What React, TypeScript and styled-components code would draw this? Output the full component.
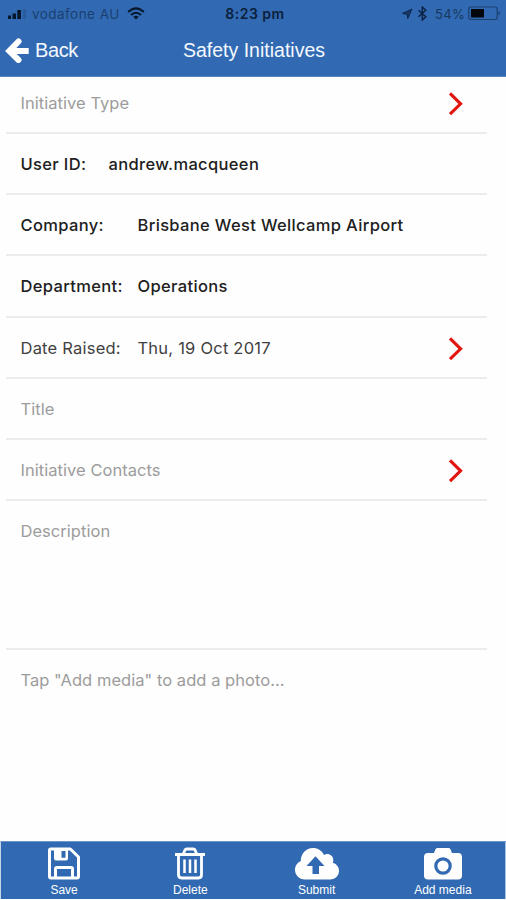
import React from "react";
import styled, { createGlobalStyle } from "styled-components";

const GlobalStyle = createGlobalStyle`
  * { box-sizing: border-box; }
  body { margin: 0; background: #fff; }
`;

const BLUE = "#316ab2";

const Screen = styled.div`
  display: flex;
  flex-direction: column;
  width: 506px;
  height: 900px;
  overflow: hidden;
  background: #fefefe;
  font-family: Inter, "Liberation Sans", sans-serif;
`;

const Header = styled.header`
  flex: none;
  height: 77px;
  background: ${BLUE};
  border-bottom: 1px solid #5583bd;
`;

const StatusBar = styled.div`
  display: grid;
  grid-template-columns: 1fr auto 1fr;
  align-items: center;
  height: 27px;
  padding: 0 5px 0 7px;
  color: #10294c;
  font-size: 13px;
`;

const StatusGroup = styled.div<{ $end?: boolean }>`
  display: flex;
  align-items: center;
  justify-content: ${(p) => (p.$end ? "flex-end" : "flex-start")};
`;

const Carrier = styled.span`
  margin: 0 7px 0 5px;
  font-size: 13.5px;
  letter-spacing: 0.45px;
  color: #1b3f70;
`;

const Clock = styled.span`
  padding-left: 2px;
  font-weight: 600;
  font-size: 14px;
  letter-spacing: 0.5px;
  color: #0b1f3c;
`;

const Percent = styled.span`
  margin: 0 3px 0 7px;
  letter-spacing: 0.3px;
  color: #183861;
`;

const NavBar = styled.div`
  display: grid;
  grid-template-columns: 1fr auto 1fr;
  align-items: center;
  height: 46px;
  padding: 0 3px 0 5px;
  color: #f4f8ff;
  font-family: "Liberation Sans", Arial, sans-serif;
`;

const BackButton = styled.button`
  display: flex;
  align-items: center;
  gap: 6px;
  padding: 0;
  border: 0;
  background: none;
  color: inherit;
  font: 20px/24px "Liberation Sans", Arial, sans-serif;
  letter-spacing: -0.4px;
`;

const Title = styled.h1`
  margin: 0;
  font-size: 19.5px;
  line-height: 24px;
  font-weight: 400;
`;

const Form = styled.main`
  flex: 1;
  padding: 0 19px 0 6px;
`;

const Row = styled.div<{ $height?: number; $last?: boolean }>`
  display: flex;
  align-items: flex-start;
  height: ${(p) => p.$height ?? 61.2}px;
  padding: ${(p) => (p.$height && p.$height < 60 ? 15 : 19)}px 23px 0 14.5px;
  border-bottom: ${(p) => (p.$last ? 0 : 2)}px solid #ececec;
  font-size: 16.5px;
  line-height: 23px;
  white-space: nowrap;
`;

type Tone = "hint" | "strong" | "plain";
const tones: Record<Tone, string> = { hint: "#9c9c9c", strong: "#202020", plain: "#414141" };
const tracking: Record<Tone, number> = { hint: 0.04, strong: 0.35, plain: 0.22 };

const Text = styled.span<{ $tone: Tone; $width?: number }>`
  flex: none;
  width: ${(p) => (p.$width ? `${p.$width}px` : "auto")};
  color: ${(p) => tones[p.$tone]};
  font-weight: ${(p) => (p.$tone === "strong" ? 500 : 400)};
  letter-spacing: ${(p) => tracking[p.$tone]}px;
`;

const Chevron = styled.svg`
  flex: none;
  margin: -1px 0 0 auto;
`;

const Toolbar = styled.footer`
  display: grid;
  grid-template-columns: repeat(4, 1fr);
  flex: none;
  height: 58px;
  margin-bottom: 1px;
  background: ${BLUE};
  border-top: 1px solid #6d96ca;
  border-left: 1px solid #c5d6ea;
  box-shadow: inset -1px 0 #a9c2e0;
`;

const Action = styled.button`
  display: flex;
  flex-direction: column;
  align-items: center;
  padding: 5px 0 0;
  border: 0;
  background: none;
  color: #fff;
  font: 12px/14px "Liberation Sans", Arial, sans-serif;
`;

const ActionLabel = styled.span`
  margin-top: 3px;
`;

const RedChevron = () => (
  <Chevron width="16" height="25" viewBox="0 0 16 25">
    <path d="M2 2.3 12.6 12.8 2 23.2" fill="none" stroke="#e2150f" strokeWidth="3.1" />
  </Chevron>
);

const SignalIcon = () => (
  <svg width="20" height="12" viewBox="0 0 20 12">
    <path d="M1 7.500h3V11H1zM5.500 5.500h3.500V11H5.500zM10.300 2h3.700v9h-3.700z" fill="#07172e" />
    <path d="M16 1h3v10h-3z" fill="#2a5b9c" />
  </svg>
);

const WifiIcon = () => (
  <svg width="18" height="13" viewBox="0 0 18 13" fill="none" stroke="#07172e" strokeWidth="2">
    <path d="M1.2 5Q9-2.2 16.8 5M4 8q5-4.5 10 0" />
    <path d="m6.3 9.7 2.7 2.8 2.7-2.8Q9 7.8 6.3 9.7Z" fill="#07172e" stroke="none" />
  </svg>
);

const LocationIcon = () => (
  <svg width="12" height="12" viewBox="0 0 12 12">
    <path d="M11 1 6.8 10.500 6 6.200 1.500 5.400Z" fill="#173a6a" stroke="#0e294d" strokeWidth="1" />
  </svg>
);

const BluetoothIcon = () => (
  <svg width="11" height="15" viewBox="0 0 11 15">
    <path d="m1.5 4.2 7.3 6.5L5.3 14V1l3.5 3.2-7.3 6.5" fill="none" stroke="#0b2141" strokeWidth="1.4" />
  </svg>
);

const BatteryIcon = () => (
  <svg width="33" height="15" viewBox="0 0 33 15">
    <rect x=".7" y="1" width="28.5" height="12.5" rx="2.2" fill="none" stroke="#1c4071" strokeWidth="1.2" />
    <path d="M3 3h13v8.500H3z" fill="#02060d" />
    <path d="M30.500 5q3.200 2.200 0 4.500z" fill="#1c4071" />
  </svg>
);

const ArrowIcon = () => (
  <svg width="24" height="26" viewBox="0 0 24 26" fill="none" stroke="#fff" strokeWidth="6">
    <path d="M13.5 4.500 4.300 14l9.200 9" strokeLinecap="round" />
    <path d="M4 14h19.700" />
  </svg>
);

const SaveIcon = () => (
  <svg width="34" height="33" viewBox="0 0 34 33" fill="none" stroke="#fff" strokeWidth="3">
    <path d="M4 2h19.300L31.500 10v19.500q0 1.500-1.500 1.500H4q-1.500 0-1.500-1.500v-26Q2.500 2 4 2" strokeLinejoin="round" />
    <path d="M8.500 31V22q0-1.500 1.500-1.500h14q1.500 0 1.500 1.500v9" />
    <path d="M7 1h14v10.500q0 2-2 2H9q-2 0-2-2zM14.500 4v6.800h4V4z" fill="#fff" stroke="none" fillRule="evenodd" />
  </svg>
);

const TrashIcon = () => (
  <svg width="34" height="33" viewBox="0 0 34 33" fill="none" stroke="#fff" strokeWidth="2.8">
    <path d="M2 7.500h30M10 7.500 12 3q.5-1 1.800-1h6.400q1.300 0 1.800 1l2 4.500" />
    <path d="M5.500 8v19.500Q5.500 31 8.500 31h17q3 0 3-3.500V8" />
    <path d="M11.500 12.500v13.500M17 12.500v13.500M22.500 12.500v13.500" strokeWidth="2.5" />
  </svg>
);

const CloudIcon = () => (
  <svg width="46" height="33" viewBox="0 0 46 33">
    <path d="M11 32.5C5 32.5 1 28 1 22.8c0-4.1 2.4-7.1 5.8-8.8C6.7 6.8 12 1 19 1c5 0 9 2.7 11 7 4-2.5 9.3.2 9.3 5.2 0 1-.2 1.8-.6 2.6 3.7 1 6.3 4 6.3 8 0 4.9-3.8 8.7-8.7 8.7Z" fill="#fff" />
    <path d="m21.500 9.300 9 9.800H25v8h-6.500v-8h-6z" fill={BLUE} />
  </svg>
);

const CameraIcon = () => (
  <svg width="38" height="33" viewBox="0 0 38 33">
    <path d="M4 6h6l1.400-3.600Q12 1 13.700 1h10.600q1.700 0 2.300 1.400L28 6h6q4 0 4 4v18.500q0 4-4 4H4q-4 0-4-4V10q0-4 4-4Z" fill="#fff" />
    <circle cx="19" cy="19" r="7.2" fill="none" stroke={BLUE} strokeWidth="3.2" />
  </svg>
);

const actions = [
  { label: "Save", Icon: SaveIcon },
  { label: "Delete", Icon: TrashIcon },
  { label: "Submit", Icon: CloudIcon },
  { label: "Add media", Icon: CameraIcon },
];

export default function App() {
  return (
    <Screen>
      <GlobalStyle />
      <Header>
        <StatusBar>
          <StatusGroup>
            <SignalIcon />
            <Carrier>vodafone AU</Carrier>
            <WifiIcon />
          </StatusGroup>
          <Clock>8:23 pm</Clock>
          <StatusGroup $end>
            <LocationIcon />
            &nbsp;
            <BluetoothIcon />
            <Percent>54%</Percent>
            <BatteryIcon />
          </StatusGroup>
        </StatusBar>
        <NavBar>
          <BackButton>
            <ArrowIcon />
            Back
          </BackButton>
          <Title>Safety Initiatives</Title>
        </NavBar>
      </Header>
      <Form>
        <Row $height={57}>
          <Text $tone="hint">Initiative Type</Text>
          <RedChevron />
        </Row>
        <Row>
          <Text $tone="strong" $width={88}>User ID:</Text>
          <Text $tone="strong">andrew.macqueen</Text>
        </Row>
        <Row>
          <Text $tone="strong" $width={117}>Company:</Text>
          <Text $tone="strong">Brisbane West Wellcamp Airport</Text>
        </Row>
        <Row>
          <Text $tone="strong" $width={117}>Department:</Text>
          <Text $tone="strong">Operations</Text>
        </Row>
        <Row>
          <Text $tone="plain" $width={117}>Date Raised:</Text>
          <Text $tone="plain">Thu, 19 Oct 2017</Text>
          <RedChevron />
        </Row>
        <Row>
          <Text $tone="hint">Title</Text>
        </Row>
        <Row>
          <Text $tone="hint">Initiative Contacts</Text>
          <RedChevron />
        </Row>
        <Row $height={149}>
          <Text $tone="hint">Description</Text>
        </Row>
        <Row $last>
          <Text $tone="hint">Tap "Add media" to add a photo...</Text>
        </Row>
      </Form>
      <Toolbar>
        {actions.map(({ label, Icon }) => (
          <Action key={label}>
            <Icon />
            <ActionLabel>{label}</ActionLabel>
          </Action>
        ))}
      </Toolbar>
    </Screen>
  );
}
